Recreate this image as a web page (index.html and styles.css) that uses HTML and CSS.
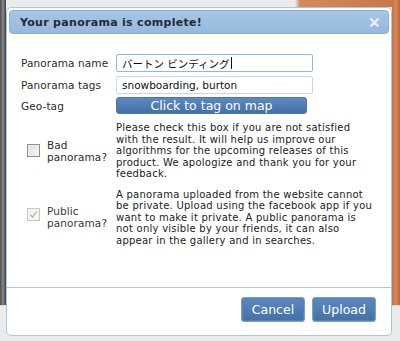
FILE: index.html
```html
<!DOCTYPE html>
<html>
<head>
<meta charset="utf-8">
<link rel="stylesheet" href="styles.css">
</head>
<body>
<div class="dialog">
  <div class="titlebar">
    <span class="title">Your panorama is complete!</span>
    <svg class="close" width="9" height="9" viewBox="0 0 9 9"><path d="M1.2 1.2 L7.8 7.8 M7.8 1.2 L1.2 7.8" stroke="#e9f1f9" stroke-width="2.2" stroke-linecap="round"/></svg>
  </div>
  <div class="content">
    <div class="form">
      <label class="lbl">Panorama name</label>
      <div class="field focus"><span>バートン ビンディング</span><span class="caret"></span></div>
      <label class="lbl">Panorama tags</label>
      <div class="field"><span>snowboarding, burton</span></div>
      <label class="lbl">Geo-tag</label>
      <button class="btn geo">Click to tag on map</button>
    </div>
    <div class="opt opt-bad">
      <div class="chk-col">
        <span class="cbox"></span>
        <span class="chk-label">Bad<br>panorama?</span>
      </div>
      <p class="desc">Please check this box if you are not satisfied<br>with the result. It will help us improve our<br>algorithms for the upcoming releases of this<br>product. We apologize and thank you for your<br>feedback.</p>
    </div>
    <div class="opt opt-pub">
      <div class="chk-col">
        <span class="cbox disabled"><svg width="11" height="11" viewBox="0 0 11 11"><path d="M2.5 5.8 L4.6 8.2 L8.6 2.4" fill="none" stroke="#b4b4b4" stroke-width="1.2"/></svg></span>
        <span class="chk-label muted">Public<br>panorama?</span>
      </div>
      <p class="desc">A panorama uploaded from the website cannot<br>be private. Upload using the facebook app if you<br>want to make it private. A public panorama is<br>not only visible by your friends, it can also<br>appear in the gallery and in searches.</p>
    </div>
  </div>
  <div class="footer">
    <button class="btn act">Cancel</button>
    <button class="btn act">Upload</button>
  </div>
</div>
</body>
</html>
```
FILE: styles.css
```css
html, body {
  margin: 0;
  padding: 0;
}
body {
  width: 400px;
  height: 341px;
  box-sizing: border-box;
  padding: 7px 8px 5px 6px;
  font-family: "DejaVu Sans", Verdana, sans-serif;
  background:
    linear-gradient(to bottom, transparent 0 305px, #d6d6d6 305px 306px, transparent 306px) ,
    linear-gradient(to right, #4a4a4a 0, #8a8a8a 3px, #3c3c3c 6px, transparent 6px, transparent 392px, #c9713f 392px, #d98a5a 396px, #b9623a 400px) top / 100% 305px no-repeat,
    linear-gradient(to right, transparent 0 295px, #d58a5e 300px, #c8744a 400px) top / 100% 7px no-repeat,
    #ebebeb;
  overflow: hidden;
}
.dialog {
  height: 329px;
  box-sizing: border-box;
  background: #fff;
  border: 1px solid #a6c9e2;
  border-radius: 5px;
  padding: 2px;
  display: flex;
  flex-direction: column;
}
.titlebar {
  height: 24px;
  box-sizing: border-box;
  border: 1px solid #88b0d8;
  border-radius: 4px;
  background: linear-gradient(to bottom, #a7c6e5, #95b9dd);
  display: flex;
  align-items: center;
  justify-content: space-between;
  padding: 0 9px 0 10px;
}
.title {
  font-weight: bold;
  font-size: 11px;
  letter-spacing: 0.3px;
  color: #1f2b38;
}
.close {
  display: block;
}
.content {
  flex: 1;
  padding: 20px 0 0 12px;
}
.form {
  display: grid;
  grid-template-columns: 95px 197px;
  row-gap: 4px;
  align-items: center;
}
.lbl {
  font-size: 10.5px;
  letter-spacing: 0.1px;
  color: #2c2c2c;
}
.field {
  height: 18px;
  box-sizing: border-box;
  border: 1px solid #c5d7e8;
  border-radius: 2px;
  font-size: 10.5px;
  color: #111;
  padding: 0 5px;
  display: flex;
  align-items: center;
  font-family: "DejaVu Sans", "Noto Sans CJK JP", sans-serif;
}
.field.focus {
  border-color: #93b8dc;
}
.caret {
  width: 1px;
  height: 12px;
  background: #111;
  margin-left: 1px;
}
.btn {
  font-family: "DejaVu Sans", Verdana, sans-serif;
  color: #fff;
  border: 1px solid #4a77aa;
  background: linear-gradient(to bottom, #5b89c0, #4470a6);
  border-radius: 3px;
  padding: 0;
  cursor: pointer;
}
.geo {
  width: 191px;
  height: 17px;
  font-size: 12.5px;
  line-height: 14px;
  margin-top: -1px;
}
.opt {
  display: flex;
  align-items: center;
}
.opt-bad {
  margin-top: 8px;
}
.opt-pub {
  margin-top: 9px;
}
.chk-col {
  width: 95px;
  display: flex;
  align-items: center;
  padding-left: 6px;
  box-sizing: border-box;
}
.cbox {
  width: 13px;
  height: 13px;
  box-sizing: border-box;
  border: 1px solid #8e8e8e;
  background: linear-gradient(135deg, #dcdcdc, #f7f7f7);
  box-shadow: inset 0 0 0 1px #f0f0f0;
  display: flex;
  align-items: center;
  justify-content: center;
  margin-right: 7px;
}
.opt-pub .cbox {
  margin-top: -6px;
}
.cbox.disabled {
  border-color: #c6c6c6;
  background: #f5f5f5;
  box-shadow: none;
}
.chk-label {
  font-size: 10.5px;
  line-height: 12px;
  letter-spacing: 0.1px;
  color: #2c2c2c;
}
.chk-label.muted {
  color: #3a3a3a;
}
.desc {
  margin: 0;
  width: 270px;
  font-size: 10px;
  line-height: 11.5px;
  letter-spacing: 0.25px;
  color: #222;
  white-space: nowrap;
}
.footer {
  border-top: 1px solid #a6c9e2;
  height: 46px;
  box-sizing: border-box;
  display: flex;
  justify-content: flex-end;
  align-items: flex-start;
  gap: 7px;
  padding: 9px 15px 0 0;
  margin: 0 -2px;
}
.act {
  width: 64px;
  height: 25px;
  font-size: 12.5px;
  border-color: #7a9fc8;
  box-shadow: inset 0 0 0 1px #5481b6;
}
```
